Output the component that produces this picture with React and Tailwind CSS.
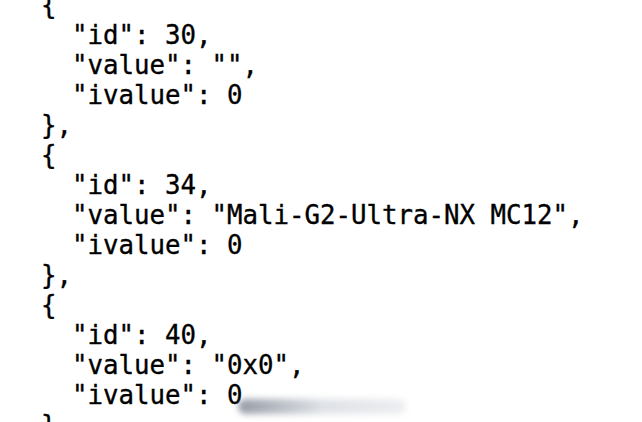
const lines = [
  "{",
  '  "id": 30,',
  '  "value": "",',
  '  "ivalue": 0',
  "},",
  "{",
  '  "id": 34,',
  '  "value": "Mali-G2-Ultra-NX MC12",',
  '  "ivalue": 0',
  "},",
  "{",
  '  "id": 40,',
  '  "value": "0x0",',
  '  "ivalue": 0',
  "}",
];

export default function App() {
  return (
    <div className="relative w-[642px] h-[422px] overflow-hidden bg-white">
      <pre className="mt-[-10px] pl-[41px] text-[25.75px] leading-[30px] text-black [-webkit-text-stroke:0.35px_black] [font-family:'DejaVu_Sans_Mono',monospace]">
        {lines.join("\n")}
      </pre>
      {/* blurred redaction smudge */}
      <div className="absolute left-[238px] top-[399px] w-[168px] h-[15px] rounded-full bg-gradient-to-r from-gray-500 via-gray-300 to-gray-200 opacity-70 blur-[3px]" />
    </div>
  );
}
